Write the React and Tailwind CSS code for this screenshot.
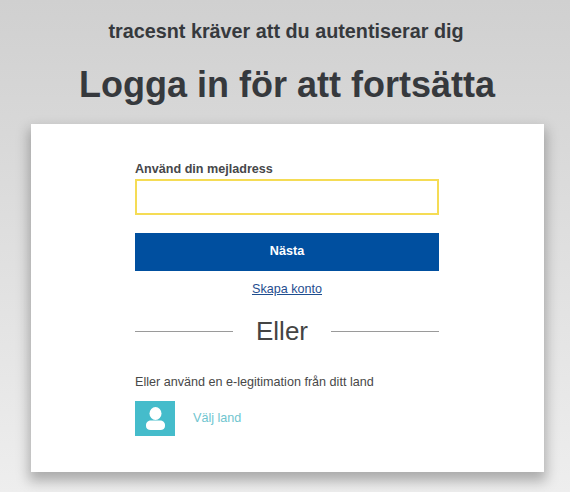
export default function App() {
  return (
    <div className="h-[492px] w-[570px] overflow-hidden bg-gradient-to-b from-[#d0d0d0] to-[#eeeeee] font-['Liberation_Sans',sans-serif] text-[#36393d]">
      {/* Header */}
      <h2 className="pl-[2px] pt-[20px] text-center text-[19.8px] font-bold leading-[22px]">
        tracesnt kräver att du autentiserar dig
      </h2>
      <h1 className="mt-[23px] pl-[4px] text-center text-[36px] font-bold leading-[40px]">
        Logga in för att fortsätta
      </h1>

      {/* Card */}
      <div className="ml-[31px] mt-[19px] h-[348px] w-[513px] bg-white pl-[104px] pr-[105px] pt-[37px] shadow-[0_7px_12px_2px_rgba(0,0,0,0.28)]">
        <label className="block text-[12.6px] font-bold leading-[16px] text-[#46474a]">
          Använd din mejladress
        </label>
        <input
          type="text"
          className="mt-[2px] block h-[36px] w-full border-2 border-[#f5dc55] bg-white outline-none"
        />
        <button className="mt-[18px] block h-[38px] w-full bg-[#004f9f] pb-[2px] text-[12.6px] font-bold text-white">
          Nästa
        </button>
        <div className="mt-[9px] text-center leading-[16px]">
          <a href="#" className="text-[12.6px] text-[#1f4e8f] underline">
            Skapa konto
          </a>
        </div>

        <div className="mt-[19px] flex items-center justify-between">
          <span className="h-px w-[98px] bg-[#9a9a9a]" />
          <span className="text-[26px] leading-[30px] text-[#444]">Eller</span>
          <span className="h-px w-[108px] bg-[#9a9a9a]" />
        </div>

        <p className="mt-[28px] text-[12.6px] leading-[16px] text-[#484848]">
          Eller använd en e-legitimation från ditt land
        </p>
        <div className="mt-[11px] flex items-center gap-[18px]">
          <div className="flex h-[35px] w-[40px] items-center justify-center bg-[#45bccb]">
            <svg width="19" height="23" viewBox="0 0 19 23" fill="#fff">
              <ellipse cx="9.5" cy="6.5" rx="6" ry="6.500" />
              <path d="M5 13.500h9c2.800 0 5 2 5 4.500v1c0 2.500-2 4-4.500 4h-10C2 23 0 21.500 0 19v-1c0-2.500 2.200-4.500 5-4.500z" />
            </svg>
          </div>
          <a href="#" className="text-[12.6px] text-[#6fc5cf]">
            Välj land
          </a>
        </div>
      </div>
    </div>
  );
}
